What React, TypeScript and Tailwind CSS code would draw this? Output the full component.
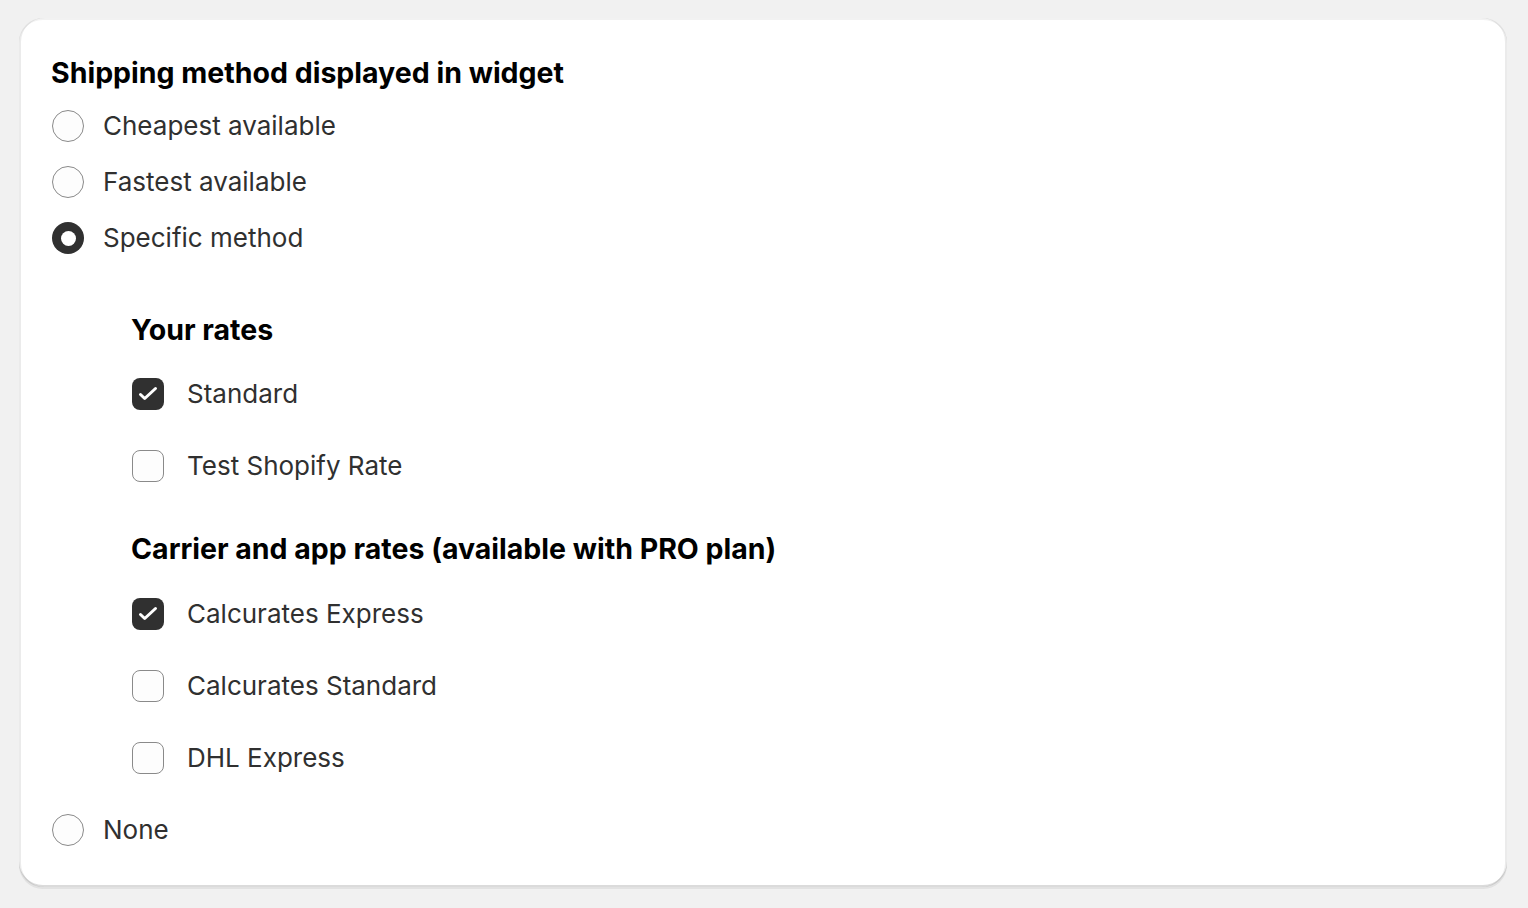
import React from "react";

const font = { fontFamily: "Inter, 'Noto Sans', sans-serif" };

function Radio({ checked }: { checked?: boolean }) {
  return checked ? (
    <span className="flex h-[32px] w-[32px] shrink-0 items-center justify-center rounded-full bg-[#303030]">
      <span className="h-[15px] w-[15px] rounded-full bg-white" />
    </span>
  ) : (
    <span className="h-[32px] w-[32px] shrink-0 rounded-full border-[1.5px] border-[#8a8a8a] bg-[#fdfdfd]" />
  );
}

function Check({ checked }: { checked?: boolean }) {
  return checked ? (
    <span className="flex h-[32px] w-[32px] shrink-0 rounded-[8px] bg-[#303030]">
      <svg width="32" height="32" viewBox="0 0 32 32" fill="none">
        <path d="M8.5 16.5l4.2 4L23.5 10.5" stroke="white" strokeWidth="3" strokeLinecap="round" strokeLinejoin="round" />
      </svg>
    </span>
  ) : (
    <span className="h-[32px] w-[32px] shrink-0 rounded-[8px] border-[1.5px] border-[#8a8a8a] bg-[#fdfdfd]" />
  );
}

function RadioRow({ label, checked, className = "" }: { label: string; checked?: boolean; className?: string }) {
  return (
    <div className={"flex h-[32px] items-center gap-[19px] pl-[1px] " + className}>
      <Radio checked={checked} />
      <span className="text-[26px] leading-[32px] text-[#303030]">{label}</span>
    </div>
  );
}

function CheckRow({ label, checked, className = "" }: { label: string; checked?: boolean; className?: string }) {
  return (
    <div className={"flex h-[32px] items-center gap-[23px] pl-[1px] " + className}>
      <Check checked={checked} />
      <span className="text-[26px] leading-[32px] text-[#303030]">{label}</span>
    </div>
  );
}

export default function App() {
  return (
    <div className="min-h-[908px] w-[1528px] bg-[#f1f1f1] pt-[18px] pl-[19px]" style={font}>
      <div className="flex h-[869px] w-[1488px] flex-col rounded-[24px] bg-white pl-[32px] pt-[39px] shadow-[0_2px_0_0_rgba(26,26,26,0.07),inset_0_-2px_0_0_rgba(0,0,0,0.14),inset_2px_0_0_0_rgba(0,0,0,0.08),inset_-2px_0_0_0_rgba(0,0,0,0.08),inset_0_2px_0_0_rgba(0,0,0,0.05)]">
        <h2 className="h-[32px] text-[28.5px] font-bold leading-[32px] text-black">Shipping method displayed in widget</h2>
        <RadioRow label="Cheapest available" className="mt-[21px]" />
        <RadioRow label="Fastest available" className="mt-[24px]" />
        <RadioRow label="Specific method" checked className="mt-[24px]" />
        <div className="flex flex-col pl-[80px]">
          <h3 className="mt-[60px] h-[32px] text-[28.5px] font-bold leading-[32px] text-black">Your rates</h3>
          <CheckRow label="Standard" checked className="mt-[32px]" />
          <CheckRow label="Test Shopify Rate" className="mt-[40px]" />
          <h3 className="mt-[51px] h-[32px] text-[28.5px] font-bold leading-[32px] text-black">
            Carrier and app rates (available with PRO plan)
          </h3>
          <CheckRow label="Calcurates Express" checked className="mt-[33px]" />
          <CheckRow label="Calcurates Standard" className="mt-[40px]" />
          <CheckRow label="DHL Express" className="mt-[40px]" />
        </div>
        <RadioRow label="None" className="mt-[40px]" />
      </div>
    </div>
  );
}
